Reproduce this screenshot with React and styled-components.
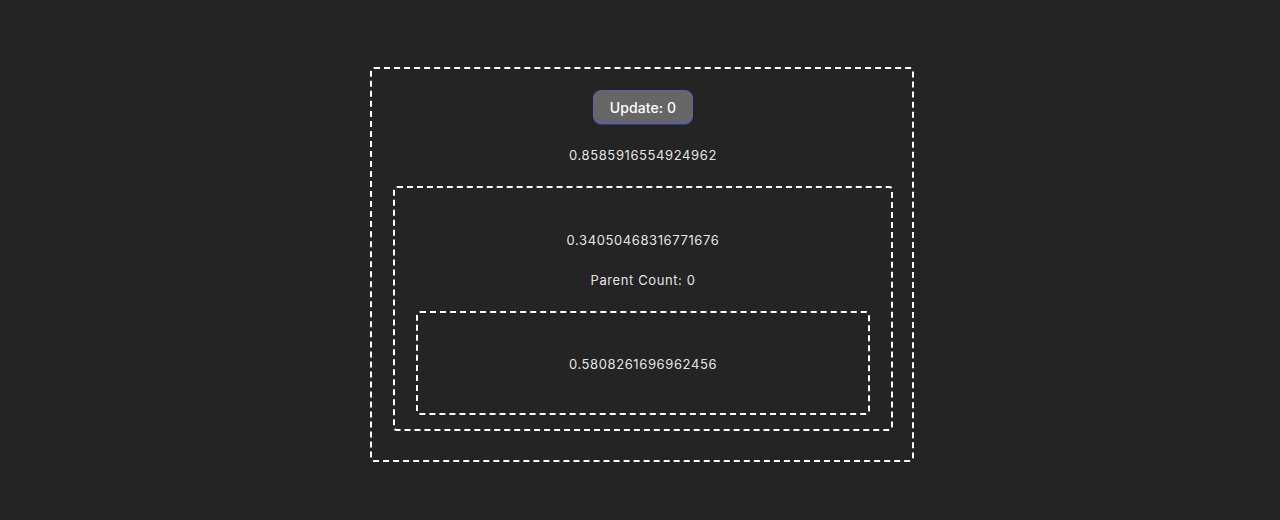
import React from "react";
import styled, { createGlobalStyle } from "styled-components";

const GlobalStyle = createGlobalStyle`
  html, body {
    margin: 0;
    padding: 0;
    background: #242424;
    color: rgba(255, 255, 255, 0.87);
    font-family: Inter, "Noto Sans", "Liberation Sans", sans-serif;
    -webkit-font-smoothing: antialiased;
  }
  * { box-sizing: border-box; }
`;

const Page = styled.main`
  min-height: 520px;
  display: flex;
  justify-content: center;
  align-items: flex-start;
  padding: 67px 0 0 4px;
`;

const Box = styled.section`
  display: flex;
  flex-direction: column;
  align-items: center;
  align-self: ${(p) => (p.$stretch ? "stretch" : "auto")};
  width: ${(p) => p.$width || "auto"};
  margin-top: ${(p) => p.$mt || "0"};
  padding: ${(p) => p.$pad};
  gap: ${(p) => p.$gap || "0"};
  border: 2px dashed #ffffff;
  border-radius: 4px;
`;

const UpdateButton = styled.button`
  height: 34px;
  width: 100px;
  padding: 0;
  border-radius: 8px;
  border: 1px solid #5a5fb8;
  background: #666666;
  box-shadow: 0 1px 0 #34377a;
  color: #ffffff;
  font-family: inherit;
  font-size: 14px;
  font-weight: 500;
  letter-spacing: 0.1px;
  cursor: pointer;
`;

const Value = styled.p`
  margin: 0;
  font-size: 13px;
  line-height: 20px;
  letter-spacing: 0.6px;
  color: rgba(255, 255, 255, 0.9);
`;

export default function App() {
  return (
    <>
      <GlobalStyle />
      <Page>
        <Box $width="544px" $pad="21px 19px 29px 21px" $gap="21px">
          <UpdateButton>Update: 0</UpdateButton>
          <Value>0.8585916554924962</Value>
          <Box $stretch $pad="42px 21px 14px" $gap="20px">
            <Value>0.34050468316771676</Value>
            <Value>Parent Count: 0</Value>
            <Box $stretch $mt="1px" $pad="41px 21px 39px">
              <Value>0.5808261696962456</Value>
            </Box>
          </Box>
        </Box>
      </Page>
    </>
  );
}
